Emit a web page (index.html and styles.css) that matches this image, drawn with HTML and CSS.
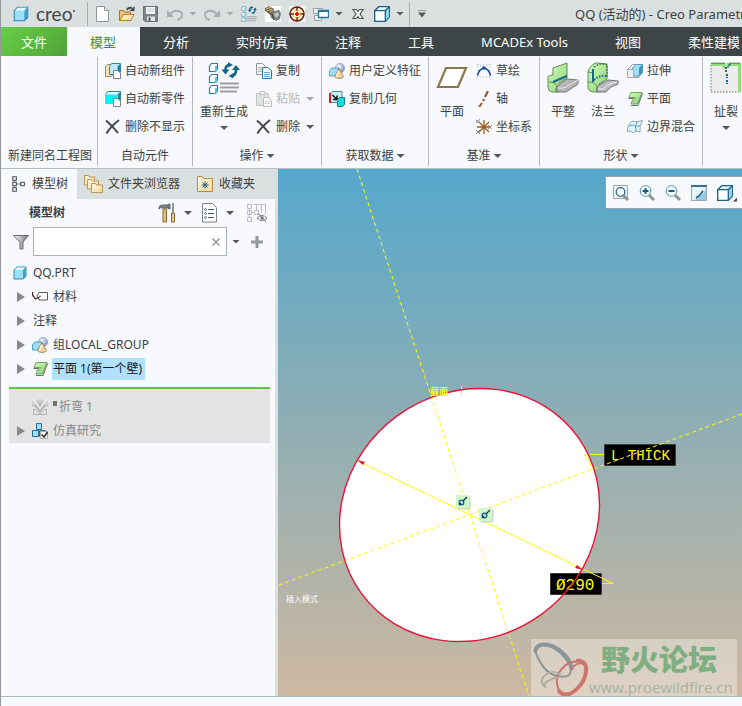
FILE: index.html
```html
<!DOCTYPE html>
<html lang="zh-CN">
<head>
    <meta charset="UTF-8">
    <meta name="viewport" content="width=device-width, initial-scale=1.0">
    <title>QQ (活动的) - Creo Parametric</title>
    <link rel="stylesheet" href="styles.css">
</head>
<body>

    <!-- Shared icons -->
    <svg class="icon-defs" aria-hidden="true">
        <defs>
            <linearGradient id="sheet" x1="0" y1="0" x2="1" y2="1">
                <stop offset="0" stop-color="#d6fbbb"/><stop offset="1" stop-color="#86d278"/>
            </linearGradient>
            <linearGradient id="folder" x1="0" y1="0" x2="1" y2="1">
                <stop offset="0" stop-color="#fffbe9"/><stop offset="1" stop-color="#f9d693"/>
            </linearGradient>
            <linearGradient id="metal" x1="0" y1="0" x2="1" y2="0">
                <stop offset="0" stop-color="#fff"/><stop offset="1" stop-color="#6f7376"/>
            </linearGradient>
            <radialGradient id="ball" cx=".35" cy=".35" r=".8">
                <stop offset="0" stop-color="#fff"/><stop offset="1" stop-color="#6d80c4"/>
            </radialGradient>
        </defs>
        <symbol id="i-part" viewBox="0 0 16 16">
            <path d="M2 5l3-3h9v9l-3 3H2z" fill="#9be0fb" stroke="#2c87ae"/>
            <path d="M2.500 5L5 2.500h8.500L11 5z" fill="#e4f8ff"/>
            <path d="M11 5l2.500-2.500V11L11 13.500z" fill="#3f9cc4"/>
        </symbol>
        <symbol id="i-box" viewBox="0 0 16 16">
            <path d="M.7 4.700l4-4h10.600v10.600l-4 4H.7z" fill="#dff5ff" stroke="#1b6180" stroke-width="1.300"/>
            <path d="M11.600 4.700L15 1.300v9.700l-3.400 3.600z" fill="#8bd3f0"/>
            <path d="M.7 4.700h10.600v10.600H.7z" fill="#fff" stroke="#1b6180" stroke-width="1.300"/>
            <path d="M11.300 4.700l4-4" stroke="#1b6180" stroke-width="1.300"/>
        </symbol>
        <symbol id="i-x" viewBox="0 0 16 16">
            <path d="M1 1.500c4 3.500 8.500 8 12 12.500M14 1C9 5 4.500 9 1.500 14.500" fill="none" stroke="#44494c" stroke-width="2"/>
        </symbol>
        <symbol id="i-group" viewBox="0 0 16 16">
            <circle cx="11" cy="5" r="4.600" fill="url(#ball)" stroke="#7f8fc8" stroke-width=".6"/>
            <path d="M.5 7.500L3 5h7v6l-2 2H.5z" fill="#9fdcf5" stroke="#3d93b8" stroke-width=".8"/>
            <path d="M10 5.500l4.500 8c-1 2.500-8 2.500-9 0z" fill="#f2d29b" stroke="#8e7145" stroke-width=".8"/>
            <path d="M9.500 8l-2 6" stroke="#fff6df" stroke-width="1.500"/>
        </symbol>
        <symbol id="i-flat" viewBox="0 0 16 16">
            <path d="M4 1.500h11L10.500 13H4l1.500-4h2l1-2.500H2z" fill="url(#sheet)" stroke="#5c8d50" stroke-width=".8"/>
            <path d="M15.500 2.500L11 14.500H4M1.500 7.500h5.500" fill="none" stroke="#667064"/>
        </symbol>
        <symbol id="i-regen" viewBox="0 0 32 32">
            <g fill="#fff" stroke="#2b80a0" stroke-width="1.200">
                <path d="M1.500 4l2-2.500h6V7l-2 2.500h-6z"/><path d="M1.500 15l2-2.500h6V18l-2 2.500h-6z"/><path d="M1.500 26l2-2.500h6V29l-2 2.500h-6z"/>
            </g>
            <path d="M8 4v5.500M8 15v5.500M8 26v5.500" stroke="#69bfe2" stroke-width="2"/>
            <path d="M22 2.500q-5 1-4.500 6M23 14q5.500-.5 5-7" fill="none" stroke="#15658a" stroke-width="2.600"/>
            <path d="M13.500 7.500h8l-4 5zM24 8h8l-4-5zM20 0l5 3-5 2.500zM25.500 11l-5 3 5 2.500z" fill="#15658a"/>
            <path d="M12 21.500h19M12 25.500h19M12 29.500h17" stroke="#9b9da2" stroke-width="1.800"/>
        </symbol>
    </svg>

    <header class="title-bar">
        <svg class="icon logo-cube"><use href="#i-part"/></svg>
        <span class="logo">creo<i class="logo-dot"></i></span>
        <div class="quick-access">
            <button aria-label="新建"><svg class="icon" viewBox="0 0 16 16"><path d="M1.500.5h8l4 4v11h-12z" fill="#fff" stroke="#90959a"/><path d="M9.500.5v4h4" fill="#e3e7ea" stroke="#90959a"/></svg></button>
            <button aria-label="打开"><svg class="icon" viewBox="0 0 16 16"><path d="M.5 14.500v-10h4l1 1.500h6v8.500z" fill="#efc078" stroke="#a8732d"/><path d="M.8 14.500L4.500 8.500H15l-3 6z" fill="url(#folder)" stroke="#b27d34"/><path d="M8 4q1-3 5-2" fill="none" stroke="#3f4750" stroke-width="1.800"/><path d="M15.500 0v5h-5z" fill="#3f4750"/></svg></button>
            <button aria-label="保存"><svg class="icon" viewBox="0 0 16 16"><path d="M.5.5h14v15H2l-1.500-1.500z" fill="#7c8287" stroke="#6a6f73"/><path d="M3 1h9v7H3z" fill="#f4f6f7"/><path d="M4 3h7M4 5h7" stroke="#c9ced1"/><path d="M4 10.500h8V15H4z" fill="#dfe3e5"/><path d="M5.500 11.500h2V15h-2z" fill="#4b5054"/></svg></button>
            <button aria-label="撤消"><svg class="icon" viewBox="0 0 16 16"><path d="M3 9q3-5 8-4t4 5q-1 3-5 4" fill="none" stroke="#a9adaf" stroke-width="2"/><path d="M0 4v7h7z" fill="#a9adaf"/></svg></button>
            <button class="caret muted" aria-label="撤消列表"></button>
            <button aria-label="重做"><svg class="icon" viewBox="0 0 16 16"><path d="M13 9q-3-5-8-4t-4 5q1 3 5 4" fill="none" stroke="#a9adaf" stroke-width="2"/><path d="M16 4v7H9z" fill="#a9adaf"/></svg></button>
            <button class="caret muted" aria-label="重做列表"></button>
            <button aria-label="重新生成"><svg class="icon"><use href="#i-regen"/></svg></button>
            <button aria-label="零件工具"><svg class="icon" viewBox="0 0 16 16"><path d="M0 0h16v16H0z" fill="#fff"/><path d="M0 2l4-2 5 3v4L6 9 0 5z" fill="#7d6848"/><path d="M1 3l5-2M2 5l5-2M4 7l4-3" stroke="#d7c294"/><path d="M5 8l4-3 5-1 2 3-1 6-4 2-5-3z" fill="#7b7f7d"/><path d="M9 8l4-2 1 3-3 3z" fill="#c6cac7"/><path d="M7 8l2 6M3 5l3 4" stroke="#3a3730"/></svg></button>
            <button aria-label="定位"><svg class="icon" viewBox="0 0 16 16"><path d="M0 0h16v16H0z" fill="#fff"/><circle cx="8" cy="8" r="7" fill="#fff7c5" stroke="#601717" stroke-width="1.500"/><path d="M8 1v4M8 11v4M1 8h4M11 8h4" stroke="#601717" stroke-width="1.500"/><circle cx="8" cy="8" r="4" fill="none" stroke="#d3b128" stroke-dasharray="2 1"/><path d="M6 8h4M8 6v4" stroke="#e31212" stroke-width="2"/></svg></button>
            <button aria-label="窗口"><svg class="icon" viewBox="0 0 16 16"><path d="M.5 2.500h9v5h-9zM1.500 9.500h7v5h-7z" fill="#f4f5f5" stroke="#9a9fa1"/><path d="M5.500 4.500h10v7h-10z" fill="#fff" stroke="#28779a" stroke-width="1.300"/><path d="M5 5h11" stroke="#28779a" stroke-width="2"/></svg></button>
            <button class="caret" aria-label="窗口列表"></button>
            <button aria-label="关闭"><svg class="icon" viewBox="0 0 16 16"><path d="M3 3.500h3.500L8 5.500l1.500-2H13L10 8l3 4.500H9.500L8 10.500l-1.500 2H3L6 8z" fill="#fff" stroke="#505557" stroke-width="1.200"/></svg></button>
            <button aria-label="显示样式"><svg class="icon"><use href="#i-box"/></svg></button>
            <button class="caret" aria-label="显示样式列表"></button>
        </div>
        <button class="caret customize" aria-label="自定义快速访问工具栏"></button>
        <h1 class="window-title">QQ (活动的) - Creo Parametric</h1>
    </header>

    <nav class="ribbon-tabs">
        <button class="ribbon-tab file-tab">文件</button>
        <button class="ribbon-tab active">模型</button>
        <button class="ribbon-tab">分析</button>
        <button class="ribbon-tab">实时仿真</button>
        <button class="ribbon-tab">注释</button>
        <button class="ribbon-tab">工具</button>
        <button class="ribbon-tab">MCADEx Tools</button>
        <button class="ribbon-tab">视图</button>
        <button class="ribbon-tab">柔性建模</button>
    </nav>

    <section class="ribbon">
        <div class="ribbon-group">
            <div class="group-body"></div>
            <button class="group-name">新建同名工程图</button>
        </div>

        <div class="ribbon-group">
            <div class="group-body">
                <div class="tool-column">
                    <button class="tool"><svg class="icon" viewBox="0 0 16 16"><path d="M.5 3.500l2-2h6v9l-2 3h-6z" fill="#f9e3ae" stroke="#a38a55"/><path d="M4.500 3.500l2-3h9v9l-3 2h-8z" fill="#bfeafb" stroke="#3385a8"/><path d="M12.500 3.500l2.500-2.500v8l-2.500 2z" fill="#2b80a5"/><path d="M8.500 7.500h4l3 2.500v5.500h-7z" fill="#fff" stroke="#7e8386"/></svg>自动新组件</button>
                    <button class="tool"><svg class="icon" viewBox="0 0 16 16"><path d="M.5 3.500l2-3h13v9l-3 3H.5z" fill="#e6fbff" stroke="#2c8294"/><path d="M0 3.500h12V13H0z" fill="#00f6f6"/><path d="M12.500 3.500l2.500-2.500v8l-2.500 2z" fill="#2b80a5"/><path d="M8.500 7.500h4l3 2.500v5.500h-7z" fill="#fff" stroke="#7e8386"/></svg>自动新零件</button>
                    <button class="tool"><svg class="icon"><use href="#i-x"/></svg>删除不显示</button>
                </div>
            </div>
            <button class="group-name">自动元件</button>
        </div>

        <div class="ribbon-group">
            <div class="group-body">
                <button class="big-tool"><svg class="big-icon"><use href="#i-regen"/></svg>重新生成<i class="caret"></i></button>
                <div class="tool-column">
                    <button class="tool"><svg class="icon" viewBox="0 0 16 16"><path d="M.5.500h6l3 3v8h-9z" fill="#fff" stroke="#96999c"/><path d="M2 4.500h5M2 6.500h4M2 8.500h4" stroke="#b5b8ba"/><path d="M6.500 4.500h5l4 3v8h-9z" fill="#eefaff" stroke="#26779a"/><path d="M8 9.500h6M8 11.500h6M8 13.500h6" stroke="#6eabc3"/></svg>复制</button>
                    <button class="tool" disabled><svg class="icon" viewBox="0 0 16 16"><path d="M.5 2.500h12v12H.5z" fill="#dfe1e2" stroke="#bfc2c4"/><path d="M4 .5h5v3H4z" fill="#f4f4f4" stroke="#bfc2c4"/><path d="M7.500 6.500h5l3 3v6h-8z" fill="#fff" stroke="#b8bbbd"/><path d="M9 10.500h5M9 12.500h5" stroke="#ccc"/></svg>粘贴<i class="caret muted"></i></button>
                    <button class="tool"><svg class="icon"><use href="#i-x"/></svg>删除<i class="caret"></i></button>
                </div>
            </div>
            <button class="group-name">操作<i class="caret"></i></button>
        </div>

        <div class="ribbon-group">
            <div class="group-body">
                <div class="tool-column">
                    <button class="tool"><svg class="icon"><use href="#i-group"/></svg>用户定义特征</button>
                    <button class="tool"><svg class="icon" viewBox="0 0 16 16"><path d="M1 2.500L3 .5h10v8l-2 3H1z" fill="#c3f4f5" stroke="#247680" stroke-width=".8"/><path d="M1 2v10" stroke="#ef1717" stroke-width="2"/><path d="M3.500 4l4 4M8 4.500V8.500H4" fill="none" stroke="#111" stroke-width="1.500"/><path d="M8.500 8.500l2-2h5v7l-2 2h-5z" fill="#12dedf" stroke="#117d85"/></svg>复制几何</button>
                </div>
            </div>
            <button class="group-name">获取数据<i class="caret"></i></button>
        </div>

        <div class="ribbon-group">
            <div class="group-body">
                <button class="big-tool"><svg class="big-icon" viewBox="0 0 32 32"><path d="M10 6h20l-8 19H2z" fill="#fff" stroke="#8b7650" stroke-width="2.200"/></svg>平面</button>
                <div class="tool-column">
                    <button class="tool"><svg class="icon" viewBox="0 0 16 16"><path d="M1 2h14M1 14h14M2 1v14M14 1v14" stroke="#a8b4bd" stroke-dasharray="1 2"/><path d="M1.500 12.500Q3 6 8 5q5 1 6.500 7.500" fill="none" stroke="#174a8a" stroke-width="1.600"/><path d="M6.500 3.500h3v3h-3z" fill="#174a8a"/></svg>草绘</button>
                    <button class="tool"><svg class="icon" viewBox="0 0 16 16"><path d="M12 0L9 6M8 8l-1 2M6 12l-3 4" stroke="#9b5620" stroke-width="2"/></svg>轴</button>
                    <button class="tool"><svg class="icon" viewBox="0 0 16 16"><path d="M8 1v14M1 8h14M3 3l10 10M13 3L3 13" stroke="#a05a25" stroke-width="1.300"/><path d="M0 1l3 2M0 4V1M4 0L1 4M0 11l4 4M0 15l4-4M12 6l4 4M12 10l4-4" stroke="#888" /></svg>坐标系</button>
                </div>
            </div>
            <button class="group-name">基准<i class="caret"></i></button>
        </div>

        <div class="ribbon-group">
            <div class="group-body">
                <button class="big-tool"><svg class="big-icon" viewBox="0 0 32 32"><path d="M1 25V15q0-1 1-1l4-1V6l14-5v15l-8 5v9H5q-4-1-4-5z" fill="url(#sheet)" stroke="#648a5a"/><path d="M13 22l7-5 11 1v4L19 30H9v-4z" fill="#b3b5b6" stroke="#707476"/><path d="M10 26h7l14-8" fill="none" stroke="#e7e8e8"/><path d="M2 20q7 0 8 5v5" fill="none" stroke="#648a5a"/><path d="M6 20l14-6" stroke="#16658a" stroke-width="2"/></svg>平整</button>
                <button class="big-tool"><svg class="big-icon" viewBox="0 0 32 32"><path d="M1 26V10Q3 3 9 1l11 1v15l-8 5v8H6q-5-1-5-4z" fill="url(#sheet)" stroke="#648a5a"/><path d="M12 23l9-5 10 1v3q-8 2-12 8H10v-4z" fill="#b8babb" stroke="#707476"/><path d="M11 27h5q5-6 14-7" fill="none" stroke="#eee"/><path d="M1 20q8 0 9 5v5M1 10l5 1" fill="none" stroke="#648a5a"/><path d="M6 7v13" stroke="#16658a" stroke-width="2"/><path d="M7 5q7-5 13-2v13" fill="none" stroke="#3b6f34" stroke-dasharray="1.500 1.500" stroke-width="1.500"/><path d="M7 18q5-5 13-4" fill="none" stroke="#16658a" stroke-dasharray="1.500 1.500" stroke-width="2"/></svg>法兰</button>
                <div class="tool-column">
                    <button class="tool"><svg class="icon" viewBox="0 0 16 16"><path d="M.5 6.500l5-5h10v8l-4 5H.5z" fill="#f4f6f7" stroke="#939799"/><path d="M5.500 5L9 1.500h6.500v8L12 13H5.500z" fill="#9cddf8" stroke="#4f99b9"/><path d="M12 5l3-3v7.500l-3 3z" fill="#4290b4"/><path d="M.5 6.500h6v8h-6z" fill="#eceeef" stroke="#aaa"/></svg>拉伸</button>
                    <button class="tool"><svg class="icon"><use href="#i-flat"/></svg>平面</button>
                    <button class="tool"><svg class="icon" viewBox="0 0 16 16"><path d="M5 2q5 2 10.500-.5Q12 7 13 13q-5-2-7 1Q4 11 .5 12.500 0 6 5 2z" fill="#dff5ff" stroke="#78909b" stroke-width=".8"/><path d="M2 7q4-2 5.500 0 3 1 5.500-.5M10 2.500Q7 8 9.500 12.500" fill="none" stroke="#3a8cb0" stroke-width=".8"/></svg>边界混合</button>
                </div>
            </div>
            <button class="group-name">形状<i class="caret"></i></button>
        </div>

        <div class="ribbon-group">
            <div class="group-body">
                <button class="big-tool"><svg class="big-icon" viewBox="0 0 32 32"><path d="M1 3h28v27H1z" fill="#ececec"/><path d="M1 3v27h28" fill="none" stroke="#999" stroke-width="1.500" stroke-dasharray="1.500 1.500"/><path d="M1 2.500h13v4M18 6V2.500h11.500V30" fill="none" stroke="#93dc7d" stroke-width="3"/><path d="M1 1.200h14M19 1.200h11" stroke="#4e7d43"/><path d="M16 5v6M17 12v4M17 18v4M20 2l-2 3" stroke="#16658a" stroke-width="2" stroke-dasharray="2 1"/></svg>扯裂<i class="caret"></i></button>
            </div>
            <div class="group-name"></div>
        </div>
    </section>

    <main class="workspace">
        <aside class="sidebar">
            <div class="side-tabs">
                <button class="side-tab active"><svg class="icon" viewBox="0 0 16 18"><path d="M3 5v8M3 9h7" stroke="#555a5d"/><path d="M1 .8h4v4H1zM1 7h4v4H1zM1 13.200h4v4H1zM10 7h4v4h-4z" fill="#fff" stroke="#454b4e" stroke-width="1.200"/></svg>模型树</button>
                <button class="side-tab"><svg class="tab-icon" viewBox="0 0 20 18"><g fill="url(#folder)" stroke="#b58b4d" stroke-width=".9"><path d="M.5.5h4l1 1.500h5v8H.5z"/><path d="M3.500 4.500h4l1 1.500h6v8h-11z"/><path d="M7.500 8.500h4l1 1.500h6v7.500h-11z"/></g></svg>文件夹浏览器</button>
                <button class="side-tab"><svg class="tab-icon" viewBox="0 0 20 18"><path d="M2.500 1.500h5l1 2h9v13h-15z" fill="url(#folder)" stroke="#b78c4b"/><path d="M10 6.500v7M6.500 10h7M7.500 7.500l5 5M12.500 7.500l-5 5" stroke="#1c5f84"/></svg>收藏夹</button>
            </div>

            <div class="tree-header">
                <h2>模型树</h2>
                <div class="tree-actions">
                    <button aria-label="设置"><svg class="tab-icon" viewBox="0 0 20 20"><path d="M2 5q0-3 4-3h5v3H6Q3 4 2 6zM11 1.500l2-.5v5l-2-1" fill="#80868a" stroke="#5b6164"/><path d="M6 6h3.500v13H6z" fill="#e6be7c" stroke="#8f6a35"/><path d="M16 0v10" stroke="#777" stroke-width="1.500"/><path d="M14.500 10h3v9h-3z" fill="#ecc98a" stroke="#8f6a35"/></svg></button>
                    <button class="caret" aria-label="设置列表"></button>
                    <button aria-label="显示"><svg class="tab-icon" viewBox="0 0 20 20"><path d="M3.500.5h10l4 4v14.500h-14z" fill="#fff" stroke="#7b858a"/><path d="M9 6.500h6M9 10.500h6M9 14.500h6" stroke="#50575b"/><g fill="none" stroke="#50575b" stroke-width=".8"><circle cx="6.500" cy="6.500" r="1"/><circle cx="6.500" cy="10.500" r="1"/><circle cx="6.500" cy="14.500" r="1"/></g></svg></button>
                    <button class="caret" aria-label="显示列表"></button>
                    <button class="tree-columns" aria-label="树列" disabled><svg class="tab-icon" viewBox="0 0 20 20"><g fill="none" stroke="#bcc0c2"><path d="M.5 1.500h4v4h-4zM.5 7.500h4v4h-4zM.5 14.500h4v4h-4zM7.500 7.500h4v4h-4zM4 9.500h4M7 1.500h12M9.500 2v5M14.500 2v8M18.500 2v9M2.500 5v9"/><path d="M10 15q5-5 10 0-5 5-10 0zM11 10l8 9" stroke="#777c7e"/></g><circle cx="15" cy="15" r="1.700" fill="#777c7e"/></svg></button>
                </div>
            </div>

            <div class="tree-filter">
                <svg class="icon" viewBox="0 0 16 16"><path d="M.5 1.500h15L10 8v7H7V8z" fill="url(#metal)" stroke="#6a6f72"/></svg>
                <div class="search-box">
                    <input type="text" aria-label="过滤模型树">
                    <button aria-label="清除"><svg class="clear-icon" viewBox="0 0 10 10"><path d="M1.500 1.500l7 7M8.500 1.500l-7 7" stroke="#8b9093" stroke-width="1.300"/></svg></button>
                </div>
                <button class="caret" aria-label="过滤选项"></button>
                <button class="add-filter" aria-label="添加"><svg class="icon" viewBox="0 0 16 16"><path d="M8 2v12M2 8h12" stroke="#94989a" stroke-width="3"/></svg></button>
            </div>

            <ul class="tree">
                <li class="root"><svg class="icon"><use href="#i-part"/></svg><span>QQ.PRT</span></li>
                <li><i class="expander"></i><svg class="icon" viewBox="0 0 16 16"><path d="M5 7l2-3.500h8.500v7.500H7z" fill="#fff" stroke="#665451"/><path d="M.5 3v3l3 4 4-2" fill="none" stroke="#4a2927" stroke-width="1.300"/><circle cx="8" cy="7.200" r=".8" fill="#444"/></svg><span>材料</span></li>
                <li><i class="expander"></i><span>注释</span></li>
                <li><i class="expander"></i><svg class="icon"><use href="#i-group"/></svg><span>组LOCAL_GROUP</span></li>
                <li class="selected"><i class="expander"></i><svg class="icon"><use href="#i-flat"/></svg><span>平面 1(第一个壁)</span></li>
            </ul>
            <ul class="tree suppressed">
                <li><i class="expander hidden"></i><svg class="icon" viewBox="0 0 16 16"><path d="M0 3l4 3 4 6 4-6 4-3M1.500 15.500V10l2.500 1 4 4 4-4 2.500-1v5.500z" fill="none" stroke="#a5a5a5" stroke-width=".8"/><path d="M0 6l4 2 4 5 4-5 4-2" fill="none" stroke="#8db78a"/><path d="M5 1l3 6 3-6M8 0v7" stroke="#999" stroke-width=".8" fill="none"/></svg><i class="pending"></i><span>折弯 1</span></li>
                <li><i class="expander"></i><svg class="icon" viewBox="0 0 16 16"><path d="M4.500.5h5v6h-5zM.500 7.500h6v6h-6zM7.500 7.500h6v6h-6z" fill="#a5dcf3" stroke="#246f95"/><path d="M8.500 8.500h7v7h-7z" fill="#fff" stroke="#aaa"/><path d="M9.500 11.500l2.500 2.500 3.500-5" fill="none" stroke="#333" stroke-width="1.600"/></svg><span>仿真研究</span></li>
            </ul>
        </aside>

        <section class="viewport">
            <svg class="sketch" width="464" height="527" viewBox="0 0 464 527">
                <ellipse cx="191.500" cy="346" rx="133.600" ry="122.700" transform="rotate(-35.700 191.500 346)" fill="#fff"/>
                <!-- Dimension labels -->
                <g stroke="#3b3b30" fill="#000">
                    <path d="M326.500 275.500h71v21h-71zM272.500 404.500h51v21h-51z"/>
                </g>
                <text class="dim-text" x="333" y="291">L THICK</text>
                <text class="dim-text dim-large" x="278" y="421">Ø290</text>
                <!-- Reference axes -->
                <g class="yellow dashed">
                    <path d="M79 0l172 527M464 245L1 416"/>
                </g>
                <path class="yellow" d="M80 292l255 122.500h-11M326 285.500h-19l9 16M183.500 217v10"/>
                <ellipse class="edge" cx="191.500" cy="346" rx="133.600" ry="122.700" transform="rotate(-35.700 191.500 346)"/>
                <path d="M79 291l8 2-2 3zM305 401l-8-2 2-3z" fill="#e01535"/>
                <text class="note yellow-text" x="152" y="226">截面</text>
                <text class="note" x="8" y="433">插入模式</text>
                <!-- Constraint markers -->
                <g id="marker">
                    <path d="M180 328h12.500v12.500H180z" fill="#b3bfae" opacity=".6"/>
                    <path d="M178 326h13v13h-13z" fill="#cff9c6"/>
                    <circle cx="183.500" cy="333.500" r="2.300" fill="#b9e8fa" stroke="#155b83" stroke-width="1.300"/>
                    <path d="M181 336l2-2M185 332l4-4" stroke="#173542" stroke-width="1.200"/>
                </g>
                <use href="#marker" x="23" y="13"/>
            </svg>

            <div class="view-toolbar">
                <button aria-label="重新调整"><svg class="icon" viewBox="0 0 16 16"><path d="M.5.5h14v13H.5z" fill="#f1f3f4" stroke="#a0a5a8"/><path d="M10 10l5 5" stroke="#8f9496" stroke-width="3"/><circle cx="7.500" cy="7" r="4.300" fill="#fff" stroke="#236e93" stroke-width="1.300"/></svg></button>
                <button aria-label="放大"><svg class="icon" viewBox="0 0 16 16"><path d="M9 9l6 6" stroke="#8f9496" stroke-width="3"/><circle cx="6.500" cy="6" r="5.300" fill="#fff" stroke="#4e93b5"/><path d="M6.500 3v6M3.500 6h6" stroke="#155b83" stroke-width="2"/></svg></button>
                <button aria-label="缩小"><svg class="icon" viewBox="0 0 16 16"><path d="M9 9l6 6" stroke="#8f9496" stroke-width="3"/><circle cx="6.500" cy="6" r="5.300" fill="#fff" stroke="#4e93b5"/><path d="M3.500 6h6" stroke="#155b83" stroke-width="2"/></svg></button>
                <button aria-label="重画"><svg class="icon" viewBox="0 0 16 16"><path d="M.5.5h15v15H.5z" fill="#e9f6fc" stroke="#a0a5a8"/><path d="M15 3v12H3Q12 12 15 3z" fill="#8ccde8"/><path d="M0 1h16" stroke="#346f8b" stroke-width="2"/><path d="M5 13q4-2 7-7" fill="none" stroke="#155b83" stroke-width="1.600"/></svg></button>
                <button class="more" aria-label="显示样式"><svg class="icon"><use href="#i-box"/></svg></button>
            </div>

            <div class="watermark">
                <svg class="mark-logo" viewBox="0 0 58 58"><g fill="none" stroke-linecap="round"><path d="M6 18C-2 1 19 1 34 19c11 14 6 21-6 19S11 28 6 18z" stroke="#4c6878" stroke-width="2"/><path d="M4 12C7-2 36 8 41 30" stroke="#4c6878" stroke-width="4"/><path d="M40 30c16-15 21 5 10 17S28 58 26 46s9-23 20-23" stroke="#c32929" stroke-width="2"/><path d="M47 22c14 0 9 20-1 29s-15 6-18 2" stroke="#c32929" stroke-width="4"/><path d="M29 36c-9-7-23 3-17 11M27 39c-10 2-16 7-13 10" stroke="#8d9389" stroke-width="2"/></g></svg>
                <div class="mark-text">
                    <strong>野火论坛</strong>
                    <span>www.proewildfire.cn</span>
                </div>
            </div>
        </section>
    </main>

    <footer class="status-bar"></footer>

</body>
</html>
```

FILE: styles.css
```css
* {
    box-sizing: border-box;
}

body {
    margin: 0;
    height: 100vh;
    display: flex;
    flex-direction: column;
    overflow: hidden;
    border-left: 1px solid #96999b;
    background: #f7f9fc;
    color: #3d4143;
    font: 12px/16px "Noto Sans", "Noto Sans CJK SC", sans-serif;
}

button {
    display: flex;
    align-items: center;
    flex-shrink: 0;
    padding: 0;
    border: none;
    background: none;
    color: inherit;
    font: inherit;
    white-space: nowrap;
    cursor: pointer;
}

button:disabled { color: #b3b6b8; cursor: default; }

h1, h2 { margin: 0; }
svg { display: block; flex-shrink: 0; }

.icon-defs { position: absolute; width: 0; height: 0; }
.icon { width: 16px; height: 16px; }
.tab-icon { width: 20px; height: 20px; }
.big-icon { width: 32px; height: 32px; }
.clear-icon { width: 10px; height: 10px; }

.caret {
    width: 8px; height: 4px; flex-shrink: 0;
    background: #55595b;
    clip-path: polygon(0 0, 100% 0, 50% 100%);
}
.caret.muted { background: #a5a9ab; }

/* Title bar */
.title-bar {
    display: flex; align-items: center; height: 27px; flex-shrink: 0;
    padding-left: 11px; background: #dadfdf;
}

.logo-cube { width: 18px; height: 18px; }

.logo {
    display: flex; flex-shrink: 0; margin-left: 6px; width: 51px;
    font: 19px/24px Lato, sans-serif; color: #42484a;
}
.logo-dot {
    width: 2px; height: 2px; margin: 8px 0 0 1px;
    border-radius: 50%; background: #42484a;
}

.quick-access {
    display: flex; align-items: center; flex-shrink: 0; gap: 8px; height: 24px;
    padding: 0 6px 0 7px;
    border-left: 1px solid #a9aeb0; border-right: 1px solid #a9aeb0;
}
.quick-access .caret { margin: 0 -1px 0 -2px; }

.customize { height: 8px; margin-left: 8px; clip-path: polygon(0 0, 100% 0, 100% 1px, 0 1px, 0 3px, 100% 3px, 50% 100%, 0 3px); }

.window-title {
    margin-left: 149px; font-size: 13px; font-weight: 400; white-space: nowrap;
}

/* Ribbon tabs */
.ribbon-tabs {
    display: flex; height: 29px; flex-shrink: 0; background: #3d4546;
}
.ribbon-tab {
    padding: 0 24px 0 23px; color: #fff; font-size: 13px;
}
.ribbon-tab.active { background: #f7f9fc; color: #4c8c2c; }
.ribbon-tab.file-tab {
    padding: 0 20px;
    background: linear-gradient(135deg, #66d147, #51a138);
}

/* Ribbon */
.ribbon {
    display: flex; height: 113px; flex-shrink: 0; padding: 1px 0 2px;
    border-bottom: 1px solid #b3c0c2;
}
.ribbon-group {
    display: flex; flex-direction: column; flex-shrink: 0;
    padding: 0 5px 0 7px; border-right: 1px solid #b5b9bb;
}
.ribbon-group:last-child { border-right: none; }
.group-body { display: flex; flex: 1; gap: 8px; }
.group-name { height: 20px; justify-content: center; gap: 3px; padding-right: 2px; }
.ribbon-group:first-child .group-name { padding-right: 0; }

.tool-column { display: flex; flex-direction: column; padding-right: 2px; }
.tool { height: 28px; gap: 4px; }
.tool .caret { margin-left: 2px; }
.big-tool {
    flex-direction: column; justify-content: flex-start;
    min-width: 32px; padding-top: 5px;
}
.big-tool .big-icon { margin-bottom: 10px; }
.big-tool .caret { margin-top: 6px; }

/* Sidebar */
.workspace { display: flex; flex: 1; min-height: 0; }

.sidebar {
    width: 277px; flex-shrink: 0; border-right: 3px solid #dae0e0;
}

.side-tabs { display: flex; height: 30px; background: #dae0e0; }
.side-tab { gap: 4px; padding: 0 8px 0 7px; }
.side-tab.active { gap: 5px; padding: 0 9px 0 10px; background: #f7f9fc; }

.tree-header {
    display: flex; align-items: center; justify-content: space-between;
    height: 28px; padding: 0 8px 0 28px;
}
.tree-header h2 { font-size: 12px; }
.tree-actions { display: flex; align-items: center; gap: 7px; }
.tree-columns { margin-left: 6px; }

.tree-filter {
    display: flex; align-items: center; height: 29px;
    padding: 0 10px 0 12px; margin-bottom: 5px;
}
.search-box {
    display: flex; flex: 1; min-width: 0; height: 29px;
    margin: 0 5px 0 4px; padding-right: 5px;
    border: 1px solid #a9b2b4; background: #fff;
}
.search-box input {
    flex: 1; min-width: 0; padding: 0 5px; border: none; outline: none;
    background: none; font: inherit;
}
.add-filter { margin-left: 9px; }

.tree { list-style: none; margin: 0; padding: 0 8px; }
.tree li {
    display: flex; align-items: center; height: 24px; gap: 4px; padding-left: 8px;
}
.tree li.root { padding-left: 3px; }
.tree span { padding: 3px 1px; }
.tree .selected span { padding-right: 3px; background: #b0e2ff; color: #17191a; }

.expander {
    width: 8px; height: 10px; margin-right: 3px;
    background: #86898b; clip-path: polygon(0 0, 100% 50%, 0 100%);
}
.expander.hidden { visibility: hidden; }

.tree.suppressed {
    margin: 6px 5px 0 8px; padding: 6px 0 0;
    border-top: 2px solid #62c344; background: #e3e3e3; color: #858788;
}
.pending { width: 4px; height: 5px; margin: -8px -3px 0 1px; background: #6e7071; }

/* Graphics area */
.viewport {
    position: relative; flex: 1; min-width: 0; overflow: hidden;
    background: linear-gradient(#55a8cc, #91aeb3 50%, #cdb8a1);
}
.sketch { position: absolute; top: 0; left: 0; }

.yellow { fill: none; stroke: #ffff00; stroke-width: 1; }
.dashed { stroke-dasharray: 4 3; }
.edge { fill: none; stroke: #ea1238; stroke-width: 1.4; }
.dim-text { fill: #ffff00; font: 14px "Liberation Mono", monospace; }
.dim-large { font-size: 16px; }
.note { fill: #fff; font: 8px "Noto Sans CJK SC", sans-serif; }
.yellow-text { fill: #ffff00; font-size: 9px; font-weight: 700; }

.view-toolbar {
    position: absolute; top: 7px; right: 0;
    display: flex; align-items: center; gap: 10px; height: 33px;
    padding: 0 9px 0 7px; border: 1px solid #97a3aa; border-right: none;
    background: #f7f9fc;
}
.view-toolbar .more::after {
    content: ""; width: 4px; height: 4px; margin: 14px -4px 0 0;
    background: #44494b; clip-path: polygon(100% 0, 100% 100%, 0 100%);
}

.watermark {
    position: absolute; right: 5px; bottom: 0;
    display: flex; height: 57px; width: 206px;
    background: rgba(255, 255, 255, 0.35);
}
.mark-logo { width: 58px; height: 57px; opacity: 0.55; }
.mark-text { display: flex; flex-direction: column; align-items: flex-start; justify-content: space-between; }
.mark-text strong {
    margin-left: 12px; font: 900 29px/38px "Noto Sans CJK SC", sans-serif; color: #7fae80;
}
.mark-text span { font: 15px/17px "Open Sans", sans-serif; color: #a2b3a0; }

.status-bar { height: 10px; flex-shrink: 0; border-top: 1px solid #a9b9bb; }
```
